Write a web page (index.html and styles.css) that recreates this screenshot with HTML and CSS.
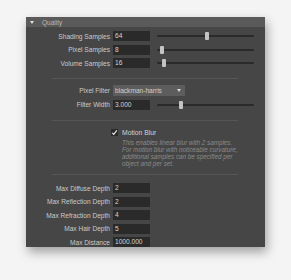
FILE: index.html
```html
<!DOCTYPE html>
<html lang="en">
<head>
  <meta charset="UTF-8">
  <title>Quality</title>
  <link rel="stylesheet" href="styles.css">
</head>
<body>

  <!-- Panel -->
  <div class="panel">
    <div class="panel-header">
      <span class="caret"></span>
      <span class="panel-title">Quality</span>
    </div>

    <div class="panel-body">
      <div class="row first">
        <span class="label">Shading Samples</span>
        <span class="field">64</span>
        <div class="slider"><span class="handle" style="left: 48px;"></span></div>
      </div>
      <div class="row">
        <span class="label">Pixel Samples</span>
        <span class="field">8</span>
        <div class="slider"><span class="handle" style="left: 3px;"></span></div>
      </div>
      <div class="row">
        <span class="label">Volume Samples</span>
        <span class="field">16</span>
        <div class="slider"><span class="handle" style="left: 5px;"></span></div>
      </div>

      <div class="separator"></div>

      <div class="row row-select">
        <span class="label">Pixel Filter</span>
        <span class="select">blackman-harris<span class="arrow"></span></span>
      </div>
      <div class="row">
        <span class="label">Filter Width</span>
        <span class="field">3.000</span>
        <div class="slider"><span class="handle" style="left: 22px;"></span></div>
      </div>

      <div class="separator"></div>

      <div class="check-row">
        <span class="checkbox">
          <svg width="7" height="7" viewBox="0 0 7 7"><polyline points="1.2,3.8 2.8,5.4 5.8,1.4" fill="none" stroke="#e6e6e6" stroke-width="1.2"/></svg>
        </span>
        <span class="check-label">Motion Blur</span>
      </div>
      <p class="note">This enables linear blur with 2 samples.<br>For motion blur with noticeable curvature,<br>additional samples can be specified per<br>object and per set.</p>

      <div class="separator after-note"></div>

      <div class="row first">
        <span class="label">Max Diffuse Depth</span>
        <span class="field">2</span>
      </div>
      <div class="row">
        <span class="label">Max Reflection Depth</span>
        <span class="field">2</span>
      </div>
      <div class="row">
        <span class="label">Max Refraction Depth</span>
        <span class="field">4</span>
      </div>
      <div class="row">
        <span class="label">Max Hair Depth</span>
        <span class="field">5</span>
      </div>
      <div class="row">
        <span class="label">Max Distance</span>
        <span class="field">1000.000</span>
      </div>
    </div>
  </div>

</body>
</html>
```

FILE: styles.css
```css
* { margin: 0; padding: 0; box-sizing: border-box; }

body {
  font-family: "Liberation Sans", Arial, sans-serif;
  background-color: #f4f4f4;
  padding: 17px 0 0 26px;
  width: 291px;
  height: 280px;
  overflow: hidden;
}

.panel {
  width: 239px;
  height: 230px;
  background-color: #464646;
  box-shadow: 2px 5px 10px rgba(0, 0, 0, 0.35);
}

.panel-header {
  display: flex;
  align-items: center;
  height: 10px;
  background-color: #5a5a5a;
  padding-left: 4px;
}

.caret {
  width: 0;
  height: 0;
  border-left: 2.5px solid transparent;
  border-right: 2.5px solid transparent;
  border-top: 3px solid #e0e0e0;
}

.panel-title {
  font-size: 6.5px;
  color: #b8b8b8;
  margin-left: 8px;
}

.panel-body {
  padding-top: 4px;
}

.row {
  display: flex;
  align-items: center;
  height: 10px;
  margin-top: 3.5px;
}

.row.first { margin-top: 0; }

.label {
  width: 84px;
  text-align: right;
  font-size: 6.6px;
  color: #cacaca;
  white-space: nowrap;
}

.field {
  width: 37px;
  height: 10px;
  margin-left: 3px;
  background-color: #2a2a2a;
  color: #d6d6d6;
  font-size: 6.6px;
  line-height: 10px;
  padding-left: 2px;
}

.slider {
  position: relative;
  width: 97px;
  height: 2px;
  margin-left: 7px;
  background-color: #2a2a2a;
  border-radius: 1px;
}

.handle {
  position: absolute;
  top: -3px;
  width: 4px;
  height: 8px;
  background-color: #c4c4c4;
  border-radius: 1px;
}

.separator {
  height: 1px;
  background-color: #565656;
  margin: 10px 27px 0 26px;
}

.separator.after-note { margin-top: 7px; }

.row-select {
  height: 11px;
  margin-top: 6px;
}

.select {
  display: flex;
  align-items: center;
  justify-content: space-between;
  width: 72px;
  height: 11px;
  margin-left: 3px;
  background-color: #5d5d5d;
  color: #d0d0d0;
  font-size: 6.6px;
  padding: 0 4px 0 2px;
  border-radius: 1px;
}

.arrow {
  width: 0;
  height: 0;
  border-left: 2.5px solid transparent;
  border-right: 2.5px solid transparent;
  border-top: 3px solid #d8d8d8;
}

.check-row {
  display: flex;
  align-items: center;
  height: 7px;
  margin: 8px 0 0 85px;
}

.checkbox {
  display: flex;
  width: 7px;
  height: 7px;
  background-color: #2a2a2a;
}

.check-label {
  font-size: 6.8px;
  color: #d2d2d2;
  margin-left: 4px;
}

.note {
  margin: 3.5px 0 0 96px;
  font-size: 6.3px;
  line-height: 7px;
  font-style: italic;
  color: #8a8a8a;
  white-space: nowrap;
}

.separator + .row.first { margin-top: 8px; }
```
